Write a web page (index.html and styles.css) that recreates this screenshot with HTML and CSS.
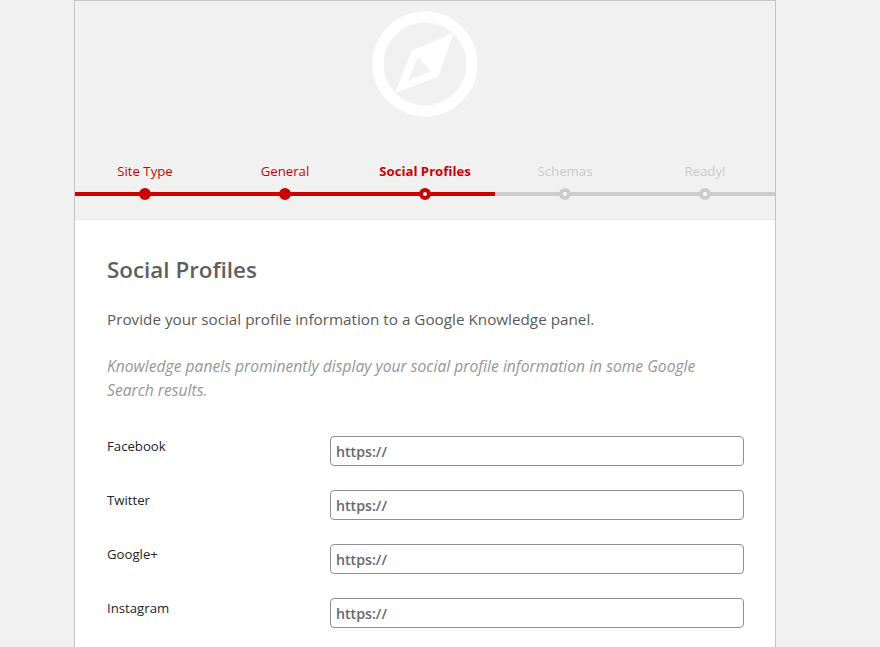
FILE: index.html
```html
<!DOCTYPE html>
<html lang="en">
<head>
  <meta charset="UTF-8" />
  <title>Social Profiles</title>
  <link rel="stylesheet" href="styles.css">
</head>
<body>

  <div class="wizard">
    <div class="wizard-head">
      <div class="logo">
        <svg width="106" height="106" viewBox="0 0 106 106">
          <circle cx="53" cy="53" r="47" fill="none" stroke="#fff" stroke-width="11"/>
          <path fill="#fff" fill-rule="evenodd" d="M81.5 22 40 39.7 23 82 66.3 65.7ZM45.7 46.3 59.3 60 35.7 70Z"/>
        </svg>
      </div>
      <ol class="steps">
        <li class="step done">Site Type</li>
        <li class="step done">General</li>
        <li class="step current">Social Profiles</li>
        <li class="step">Schemas</li>
        <li class="step">Ready!</li>
      </ol>
    </div>

    <div class="wizard-body">
      <h2>Social Profiles</h2>
      <p>Provide your social profile information to a Google Knowledge panel.</p>
      <p class="note">Knowledge panels prominently display your social profile information in some Google Search results.</p>

      <div class="field">
        <label>Facebook</label>
        <input type="text" value="https://" />
      </div>
      <div class="field">
        <label>Twitter</label>
        <input type="text" value="https://" />
      </div>
      <div class="field">
        <label>Google+</label>
        <input type="text" value="https://" />
      </div>
      <div class="field">
        <label>Instagram</label>
        <input type="text" value="https://" />
      </div>
    </div>
  </div>

</body>
</html>
```

FILE: styles.css
```css
html, body {
  height: 647px;
  overflow: hidden;
}

body {
  font-family: 'Open Sans', sans-serif;
  background: #f1f1f1;
  margin: 0;
}

.wizard {
  width: 700px;
  margin-left: 74px;
  background: #f1f1f1;
  border: 1px solid #c3c4c7;
  border-bottom: none;
}

.wizard-head {
  height: 218px;
  border-bottom: 1px solid #e8e8e8;
}

.logo {
  display: flex;
  justify-content: center;
  padding-top: 10px;
  height: 106px;
  margin-bottom: 37px;
}

.steps {
  display: flex;
  list-style: none;
  margin: 0;
  padding: 0;
}

.step {
  position: relative;
  flex: 1;
  height: 51px;
  padding-top: 8px;
  box-sizing: border-box;
  text-align: center;
  font-size: 13.2px;
  line-height: 18px;
  color: #cccccc;
}

/* line under each step */
.step::before {
  content: "";
  position: absolute;
  left: 0;
  right: 0;
  top: 38px;
  height: 4px;
  background: #cccccc;
}

/* dot on the line */
.step::after {
  content: "";
  position: absolute;
  left: 50%;
  top: 34px;
  width: 12px;
  height: 12px;
  margin-left: -6px;
  box-sizing: border-box;
  border: 4px solid #cccccc;
  border-radius: 50%;
  background: #fff;
}

.step.done {
  color: #cc0000;
}

.step.done::before,
.step.current::before {
  background: #cc0000;
}

.step.done::after {
  border-color: #cc0000;
  background: #cc0000;
}

.step.current {
  color: #cc0000;
  font-weight: bold;
}

.step.current::after {
  border-color: #cc0000;
}

.wizard-body {
  background: #ffffff;
  padding: 32px 31px 0 32px;
  color: #5a5a5a;
  height: 500px;
}

h2 {
  font-size: 22.4px;
  font-weight: 600;
  line-height: 36px;
  margin: 0 0 19px;
  color: #5f5f5f;
}

p {
  font-size: 15.25px;
  line-height: 24px;
  margin: 0 0 23px;
}

.note {
  font-size: 15.65px;
  font-style: italic;
  color: #969696;
  margin-bottom: 34px;
}

.field {
  display: flex;
  height: 30px;
  margin-bottom: 24px;
}

label {
  width: 223px;
  font-size: 13.2px;
  line-height: 20px;
  color: #1d2327;
}

input {
  flex: 1;
  min-width: 0;
  box-sizing: border-box;
  height: 30px;
  padding: 0 5px;
  border: 1px solid #8c8f94;
  border-radius: 4px;
  background: #fff;
  font-family: inherit;
  font-size: 14.2px;
  font-weight: 600;
  color: #646970;
}
```
